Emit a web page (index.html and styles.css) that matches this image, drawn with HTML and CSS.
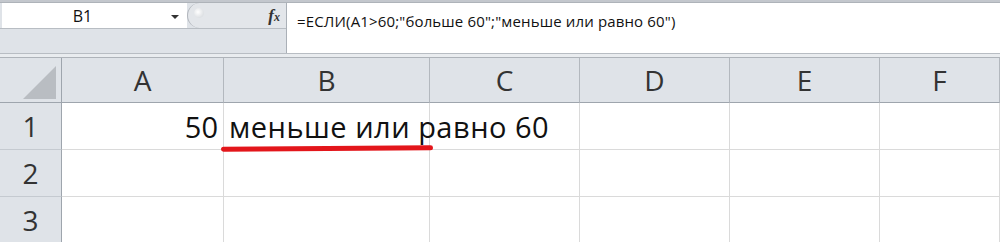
FILE: index.html
```html
<!DOCTYPE html>
<html lang="ru">
<head>
	<meta charset="UTF-8">
	<title>ЕСЛИ</title>
	<link rel="stylesheet" href="styles.css">
</head>
<body>

	<div id="bar">
		<div class="barTop"></div>
		<div class="barMain">
			<div class="leftPart">
				<div class="nameRow">
					<div class="nameBox">
						<span class="nameText">B1</span>
						<span class="arrow"></span>
					</div>
					<div class="fxBox">
						<span class="grip"></span>
						<span class="fx"><i>f</i><i class="sub">x</i></span>
					</div>
				</div>
				<div class="nameBottom"></div>
			</div>
			<div class="formula">=ЕСЛИ(A1&gt;60;"больше 60";"меньше или равно 60")</div>
		</div>
		<div class="barGap"></div>
	</div>

	<div id="sheet">
		<div class="corner"><span class="tri"></span></div>
		<div class="colHead">A</div>
		<div class="colHead">B</div>
		<div class="colHead">C</div>
		<div class="colHead">D</div>
		<div class="colHead">E</div>
		<div class="colHead">F</div>

		<div class="rowHead">1</div>
		<div class="cell num">50</div>
		<div class="cell txt">меньше или равно 60</div>
		<div class="cell"></div>
		<div class="cell"></div>
		<div class="cell"></div>
		<div class="cell"></div>

		<div class="rowHead">2</div>
		<div class="cell"></div>
		<div class="cell"></div>
		<div class="cell"></div>
		<div class="cell"></div>
		<div class="cell"></div>
		<div class="cell"></div>

		<div class="rowHead">3</div>
		<div class="cell"></div>
		<div class="cell"></div>
		<div class="cell"></div>
		<div class="cell"></div>
		<div class="cell"></div>
		<div class="cell"></div>

		<span class="mark"></span>
	</div>

</body>
</html>
```

FILE: styles.css
```css
* {padding: 0; margin: 0; box-sizing: border-box;}
html, body {width: 1000px; height: 242px; overflow: hidden; background: #fff;}
body {font-family: "Open Sans", "Noto Sans", sans-serif; color: #222;}

#bar {background: #dfe3e8;}
#bar .barTop {height: 3px; background: #c3c7cd; border-bottom: 1px solid #aeb3b9;}
#bar .barMain {display: flex; height: 50px;}
#bar .leftPart {width: 287px; display: flex; flex-direction: column; border-right: 1px solid #aab0b7;}
#bar .nameRow {display: flex; height: 26px; border-bottom: 1px solid #b8bdc3;}
#bar .nameBox {width: 185px; margin-left: 2px; background: #fff; position: relative; display: flex; align-items: center; justify-content: center;}
#bar .nameText {font-size: 16px; color: #111; margin-right: 24px;}
#bar .arrow {position: absolute; right: 8px; top: 12px; border: 4px solid transparent; border-top: 4px solid #333; border-bottom: 0;}
#bar .fxBox {flex: 1; display: flex; align-items: center; justify-content: space-between; padding: 0 4px 0 6px; border-left: 1px solid #b0b5bb; border-radius: 13px 0 0 13px; background: #e3e6ea;}
#bar .grip {width: 10px; height: 10px; border-radius: 50%; background: radial-gradient(circle at 40% 40%, #ffffff, #cfd3d8); margin-bottom: 6px;}
#bar .fx {font-family: "Liberation Serif", serif; font-size: 17px; font-weight: bold; color: #333; margin-right: 2px;}
#bar .fx .sub {font-size: 12px;}
#bar .nameBottom {flex: 1;}
#bar .formula {flex: 1; background: #fff; font-size: 15px; padding: 8px 0 0 10px; color: #111; white-space: nowrap; letter-spacing: 0.15px;}
#bar .barGap {height: 5px; border-top: 1px solid #b8bdc3; border-bottom: 1px solid #aeb3b9; background: #e9ecef;}

#sheet {position: relative; display: grid; grid-template-columns: 62px 162px 206px 150px 150px 150px 120px; grid-template-rows: 45px 47px 47px 47px;}
#sheet .corner {background: #dfe3e8; border-right: 1px solid #9ea5ad; border-bottom: 1px solid #9ea5ad; position: relative;}
#sheet .tri {position: absolute; right: 5px; bottom: 3px; border-left: 33px solid transparent; border-bottom: 33px solid #b9bdc2;}
#sheet .colHead {background: #dfe3e8; border-right: 1px solid #b3b8be; border-bottom: 1px solid #9ea5ad; font-size: 28px; color: #333; display: flex; align-items: center; justify-content: center;}
#sheet .rowHead {background: #dfe3e8; border-right: 1px solid #9ea5ad; border-bottom: 1px solid #c5cad0; font-size: 28px; color: #333; display: flex; align-items: center; justify-content: center;}
#sheet .cell {border-right: 1px solid #dadada; border-bottom: 1px solid #dadada; font-size: 29px; color: #111; display: flex; align-items: center; white-space: nowrap;}
#sheet .cell.num {justify-content: flex-end; padding-right: 5px;}
#sheet .cell.txt {padding-left: 5px; overflow: visible; letter-spacing: 0.5px;}
#sheet .mark {position: absolute; left: 221px; top: 88px; width: 212px; height: 5px; background: #e3161b; border-radius: 3px; transform: rotate(-0.4deg);}
```
